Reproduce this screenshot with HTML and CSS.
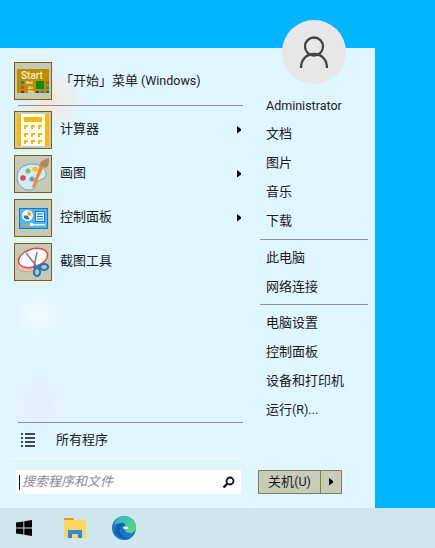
FILE: index.html
```html
<!DOCTYPE html>
<html lang="zh">
<head>
<meta charset="utf-8">
<title>开始菜单</title>
<link rel="stylesheet" href="styles.css">
</head>
<body>
<div class="desktop">
  <div class="menu">
    <div class="left">
      <div class="pinned">
        <div class="item first">
          <span class="tile">
            <svg class="ico" width="36" height="36" viewBox="0 0 36 36">
              <rect x="2" y="6" width="32" height="24" fill="#bd8d00"/>
              <text x="6" y="15.500" class="st">Start</text>
              <rect x="6" y="18" width="3" height="3" fill="#1c8aa0"/><text x="11" y="21" class="sm">Wall</text>
              <rect x="6" y="23" width="3" height="3" fill="#c8502a"/><text x="13" y="25.500" class="sm">Ale</text>
              <rect x="6" y="28" width="3" height="2" fill="#8a10a0"/><text x="13" y="30" class="sm">Rda</text>
              <rect x="21" y="18" width="8" height="8" fill="#0a8a10"/>
              <rect x="31" y="18" width="3" height="3" fill="#d05030"/><rect x="31" y="23" width="3" height="3" fill="#1c8aa0"/>
              <rect x="21" y="28" width="3" height="2" fill="#1050b0"/><rect x="26" y="28" width="3" height="2" fill="#2080c0"/><rect x="31" y="28" width="3" height="2" fill="#0a8a10"/>
            </svg>
          </span>
          <span class="label wide">「开始」菜单 <span class="lat">(Windows)</span></span>
        </div>
        <div class="rule"></div>
        <div class="item">
          <span class="tile">
            <svg class="ico" width="36" height="36" viewBox="0 0 36 36">
              <rect x="2" y="2" width="32" height="32" fill="#fdb900"/>
              <rect x="6" y="2" width="24" height="32" fill="#fff"/>
              <rect x="9" y="5" width="18" height="5" fill="#fdb900"/>
              <path d="M9 13h4v2h-2v2H9zM16 13h4v2h-2v2h-2zM23 13h4v2h-2v2h-2zM9 21h4v2h-2v2H9zM16 21h4v2h-2v2h-2zM23 21h4v2h-2v2h-2zM9 28h4v2h-2v2H9zM16 28h4v2h-2v2h-2zM23 28h4v2h-2v2h-2z" fill="#fdb900"/>
            </svg>
          </span>
          <span class="label">计算器</span>
          <svg class="arrow" width="5" height="8" viewBox="0 0 5 8"><path d="M0 0l4 3v1.500l-4 3z" fill="#000"/></svg>
        </div>
        <div class="item">
          <span class="tile">
            <svg class="ico" width="36" height="36" viewBox="0 0 36 36">
              <path d="M2 21C2 13 9 8 17 8c8 0 14 4 14 10 0 5-5 5-8 7-3 3-1 9-9 9-7 0-12-6-12-13z" fill="#d5eaf4" stroke="#5aa6d0"/>
              <circle cx="8" cy="22" r="2.800" fill="#e04848"/><circle cx="13" cy="15" r="2.600" fill="#7cc05c"/><circle cx="20" cy="13" r="2.600" fill="#f0c030"/><circle cx="17" cy="23" r="2.600" fill="#6fa0c0"/>
              <path d="M29 10L19 32l-2-1 8-22z" fill="#ee8a1c"/>
              <path d="M25 9c0-3 2-5 9-7 0 4 0 9-4 10z" fill="#b08a5c"/>
            </svg>
          </span>
          <span class="label">画图</span>
          <svg class="arrow" width="5" height="8" viewBox="0 0 5 8"><path d="M0 0l4 3v1.500l-4 3z" fill="#000"/></svg>
        </div>
        <div class="item">
          <span class="tile">
            <svg class="ico" width="36" height="36" viewBox="0 0 36 36">
              <rect x="4.500" y="8.500" width="28" height="20" fill="#4fb4f0" stroke="#1a78c0"/>
              <circle cx="12.500" cy="15.500" r="5.500" fill="#fff"/>
              <path d="M12.500 15.500v-4a4 4 0 0 1 4 4z" fill="#f0a020"/><path d="M12.500 15.500h-4a4 4 0 0 0 6 3.500z" fill="#1a78d0"/>
              <rect x="20.500" y="11.500" width="9" height="10" fill="#d8f0fc" stroke="#1a78c0"/>
              <path d="M22 14h6M22 16.500h6M22 19h6" stroke="#1a78c0"/>
              <rect x="7" y="24" width="10" height="1.500" fill="#f0a020"/><rect x="17" y="24" width="13" height="1.500" fill="#e8f6fc"/><rect x="15" y="23" width="3" height="3" fill="#fff"/>
            </svg>
          </span>
          <span class="label">控制面板</span>
          <svg class="arrow" width="5" height="8" viewBox="0 0 5 8"><path d="M0 0l4 3v1.500l-4 3z" fill="#000"/></svg>
        </div>
        <div class="item">
          <span class="tile">
            <svg class="ico" width="36" height="36" viewBox="0 0 36 36">
              <ellipse cx="16" cy="21" rx="14" ry="6.500" fill="#e2c4b8" stroke="#e09a90" transform="rotate(-10 16 21)"/>
              <ellipse cx="18" cy="14" rx="15" ry="9" fill="#fff" stroke="#e0484c" stroke-width="1.500" transform="rotate(-18 18 14)"/>
              <path d="M11 9l12 15M22 8l-3 15" stroke="#7c8488" stroke-width="1.600" fill="none"/>
              <ellipse cx="22" cy="28" rx="3" ry="4" fill="none" stroke="#1a78c8" stroke-width="2.200"/>
              <ellipse cx="29" cy="23" rx="4" ry="3" fill="none" stroke="#1a78c8" stroke-width="2.200"/>
              <path d="M19 22l2 3M23 22l3 1" stroke="#1a78c8" stroke-width="2.200"/>
            </svg>
          </span>
          <span class="label">截图工具</span>
        </div>
      </div>
      <div class="bottom">
        <div class="rule"></div>
        <div class="all">
          <svg class="list" width="14" height="14" viewBox="0 0 14 14"><path d="M0 1h2M4 1h10M0 5h2M4 5h10M0 9h2M4 9h10M0 13h2M4 13h10" stroke="#111" stroke-width="1.300"/></svg>
          <span class="all-text">所有程序</span>
        </div>
        <div class="white-rule"></div>
        <div class="search">
          <span class="caret"></span>
          <span class="hint">搜索程序和文件</span>
          <svg class="mag" width="13" height="13" viewBox="0 0 13 13"><circle cx="8" cy="5" r="3.500" fill="none" stroke="#111" stroke-width="1.800"/><path d="M5.500 7.500L1.500 11.500" stroke="#111" stroke-width="2.400"/></svg>
        </div>
      </div>
    </div>
    <div class="right">
      <div class="links">
        <div class="link top"><span class="lat">Administrator</span></div>
        <div class="link">文档</div>
        <div class="link">图片</div>
        <div class="link">音乐</div>
        <div class="link">下载</div>
        <div class="sep"></div>
        <div class="link">此电脑</div>
        <div class="link">网络连接</div>
        <div class="sep tight"></div>
        <div class="link">电脑设置</div>
        <div class="link">控制面板</div>
        <div class="link">设备和打印机</div>
        <div class="link">运行<span class="lat">(R)...</span></div>
      </div>
      <div class="power">
        <span class="power-main">关机<span class="lat">(U)</span></span>
        <span class="power-more"><svg width="5" height="8" viewBox="0 0 5 8"><path d="M0 0l4 3v1.500l-4 3z" fill="#000"/></svg></span>
      </div>
    </div>
    <div class="avatar">
      <svg width="32" height="32" viewBox="0 0 32 32"><circle cx="16" cy="10.500" r="9" fill="none" stroke="#444" stroke-width="2.300"/><path d="M3 32c0-8 5-14 13-14s13 6 13 14" fill="none" stroke="#444" stroke-width="2.300"/></svg>
    </div>
  </div>
</div>
<div class="taskbar">
  <div class="task">
    <svg width="16" height="16" viewBox="0 0 16 16"><path d="M0 2.500l7.400-1.100v6.100H0zM8.300 1.300L16 0v7.500H8.300zM0 8.400h7.400v6.200L0 13.500zM8.300 8.400H16V16l-7.700-1.300z" fill="#000"/></svg>
  </div>
  <div class="task">
    <svg width="22" height="20" viewBox="0 0 22 20"><path d="M0 0h9l1 2v3H0z" fill="#d8a010"/><rect y="2" width="22" height="18" rx="1" fill="#fdd65e"/><path d="M4 20v-8h14v8h-4v-4H8v4z" fill="#2f88d8"/></svg>
  </div>
  <div class="task">
    <svg width="24" height="24" viewBox="0 0 24 24">
      <defs>
        <linearGradient id="eg" x1="0" y1="0" x2="1" y2="1"><stop offset="0" stop-color="#2fb0d8"/><stop offset="1" stop-color="#5fe06c"/></linearGradient>
      </defs>
      <circle cx="12" cy="12" r="12" fill="#1578c8"/>
      <path d="M2 8C4 2 9 0 12 0c7 0 12 5 12 11 0 4-3 6-6 6-3 0-5-1-5-3 0-1 1-1 1-3 0-3-3-5-6-4-3 0-5 2-6 1z" fill="url(#eg)"/>
      <path d="M13 9c-4 0-6 3-5 7 1 4 6 7 11 6-3 2-9 2-13-2C2 16 3 10 7 8c2-1 5-1 6 1z" fill="#0f5ea8"/>
      <path d="M11 11c3-2 6 0 5 2-2 0-3 1-4 0-1-1-1-1-1-2z" fill="#dff4f8"/>
    </svg>
  </div>
</div>
</body>
</html>
```
FILE: styles.css
```css
* { box-sizing: border-box; }
html, body { margin: 0; height: 100%; }
body {
  width: 435px;
  height: 548px;
  overflow: hidden;
  display: flex;
  flex-direction: column;
  background: #00b4ff;
  font-family: "Noto Sans CJK SC", "Noto Sans", sans-serif;
  font-size: 13px;
  color: #1a1a1a;
}
.lat { font-family: Roboto, "Noto Sans", sans-serif; font-size: 12.5px; }
.desktop { height: 508px; padding-top: 48px; }
.menu {
  position: relative;
  width: 375px;
  height: 460px;
  display: flex;
  background-color: #dff5ff;
  background-image:
    radial-gradient(circle at 50px 52px, rgba(255,225,205,.8), rgba(255,225,205,0) 34px),
    radial-gradient(circle at 38px 160px, rgba(235,230,215,.5), rgba(235,230,215,0) 32px),
    radial-gradient(circle at 38px 267px, rgba(255,255,255,.55), rgba(255,255,255,0) 28px),
    radial-gradient(circle at 40px 357px, rgba(240,225,250,.4), rgba(240,225,250,0) 34px);
}
.left {
  width: 254px;
  padding-top: 14px;
  display: flex;
  flex-direction: column;
  justify-content: space-between;
  border-right: 1px solid #e9f8fd;
}
.item { height: 44px; padding-left: 14px; display: flex; align-items: flex-start; }
.item.first { height: 43px; }
.rule { height: 1px; margin: 0 10px 0 18px; background: #8a9296; }
.pinned .rule { margin-bottom: 5px; }
.tile {
  width: 38px;
  height: 38px;
  flex: none;
  background: #c6cab4;
  border: 1px solid #7e5f12;
  display: flex;
}
.label { margin-left: 8px; line-height: 33px; flex: 1; }
.label.wide { line-height: 35px; }
.arrow { margin: 15px 11px 0 0; }
.st { font-size: 10px; font-weight: 500; fill: #f6eed4; font-family: Roboto, sans-serif; }
.sm { font-size: 3.500px; font-weight: 700; fill: #f4ecd0; font-family: Roboto, sans-serif; }
.bottom { padding-bottom: 14px; }
.all { height: 35px; padding: 0 0 1px 21px; display: flex; align-items: center; }
.all-text { margin-left: 21px; line-height: 30px; margin-bottom: 3px; }
.white-rule { height: 1px; margin: 0 10px 0 9px; background: #fff8e8; }
.search {
  height: 24px;
  margin: 11px 12px 0 16px;
  padding: 0 6px 0 3px;
  background: #fff;
  display: flex;
  align-items: center;
}
.caret { width: 1px; height: 15px; background: #111; }
.hint { flex: 1; margin-left: 2px; font-style: italic; color: #8a8a8a; line-height: 22px; margin-bottom: 2px; }
.right {
  flex: 1;
  padding: 41px 7px 14px 6px;
  display: flex;
  flex-direction: column;
  justify-content: space-between;
}
.link { height: 29px; line-height: 29px; padding-left: 6px; }
.link.top { line-height: 31px; }
.sep { height: 1px; margin: 5px 0 2px; background: #8a9296; }
.sep.tight { margin-top: 4px; }
.power { width: 84px; height: 24px; margin-left: -2px; display: flex; background: #c6ccb8; border: 1px solid #857c50; }
.power-main { flex: 1; text-align: center; line-height: 20px; border-right: 1px solid #857c50; }
.power-more { width: 20px; display: flex; align-items: center; justify-content: center; }
.avatar {
  position: absolute;
  left: 282px;
  top: -28px;
  width: 64px;
  height: 64px;
  border-radius: 50%;
  background: #e7e7e7;
  display: flex;
  align-items: center;
  justify-content: center;
}
.taskbar { height: 40px; background: #d0e6ee; display: flex; align-items: center; padding-left: 16px; }
.task { width: 48px; display: flex; justify-content: flex-start; }
```
